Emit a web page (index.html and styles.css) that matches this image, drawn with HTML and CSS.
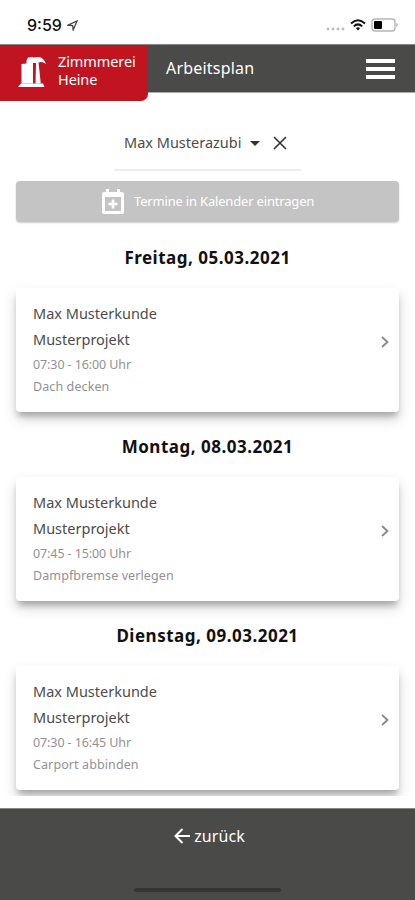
FILE: index.html
```html
<!DOCTYPE html>
<html lang="de">
<head>
    <meta charset="UTF-8">
    <meta name="viewport" content="width=device-width, initial-scale=1.0">
    <title>Arbeitsplan</title>
    <link rel="stylesheet" href="styles.css">
</head>
<body>
    <div class="status-bar">
        <span class="time">9:59</span>
        <svg class="location" width="11" height="11" viewBox="0 0 11 11"><path d="M1 5.2 10 1 6.2 10 5.6 5.6Z" fill="none" stroke="#444" stroke-width="1.3"/></svg>
        <div class="status-icons">
            <svg width="19" height="4" viewBox="0 0 19 4" fill="#bbb"><circle cx="2" cy="2" r="1.4"/><circle cx="7" cy="2" r="1.4"/><circle cx="12" cy="2" r="1.4"/><circle cx="17" cy="2" r="1.4"/></svg>
            <svg class="wifi" width="16" height="12" viewBox="0 0 16 12" fill="none" stroke="#111" stroke-width="2"><path d="M1 4.6Q8-2 15 4.6M3.8 7.4Q8 3.4 12.2 7.4"/><path d="M5.9 9.3Q8 7.3 10.1 9.3L8 11.5Z" fill="#111" stroke="none"/></svg>
            <svg width="27" height="14" viewBox="0 0 27 14"><rect x="1" y="1" width="23" height="12" rx="3" fill="#fff" stroke="#b5b5b5" stroke-width="1.4"/><rect x="3" y="3" width="8" height="8" rx="1" fill="#000"/><path d="M25.3 5v4q1.4-.6 1.4-2t-1.4-2" fill="#aaa"/></svg>
        </div>
    </div>

    <header class="header">
        <div class="brand">
            <svg class="logo" width="28" height="32" viewBox="0 0 28 32" fill="#fff">
                <path d="M3.500 8 8.500 7.500V4.500L10 1.500 15 1V27.500H3.500Z"/>
                <path d="M0 31 3 27.500H25L26.500 31Z"/>
                <path d="M15 1.500 21 1Q26 2 28 8Q24 5 20.500 6.500L22.800 27.500H17.500L18 7H15Z"/>
            </svg>
            <div class="brand-name">Zimmmerei<br>Heine</div>
        </div>
        <h1 class="title">Arbeitsplan</h1>
        <div class="menu"><span></span><span></span><span></span></div>
    </header>

    <main class="content">
        <div class="select">
            <span class="select-text">Max Musterazubi</span>
            <svg class="arrow" width="10" height="5" viewBox="0 0 10 5"><path d="M0 0h10L5 5Z" fill="#333"/></svg>
            <svg class="clear" width="14" height="14" viewBox="0 0 14 14"><path d="M1 1 13 13M13 1 1 13" stroke="#333" stroke-width="1.6"/></svg>
        </div>

        <div class="calendar-button">
            <svg width="22" height="25" viewBox="0 0 22 25"><path d="M4 0h3v3h8V0h3v3h2q2 0 2 2v18q0 2-2 2H2q-2 0-2-2V5q0-2 2-2h2ZM3 8v14h16V8Z" fill="#fff" fill-rule="evenodd"/><path d="M11 10.500v9M6.500 15h9" stroke="#fff" stroke-width="2.600"/></svg>
            <span>Termine in Kalender eintragen</span>
        </div>

        <h2 class="day">Freitag, 05.03.2021</h2>
        <div class="card">
            <div>
                <p class="customer">Max Musterkunde</p>
                <p class="project">Musterprojekt</p>
                <p class="hours">07:30 - 16:00 Uhr</p>
                <p class="task">Dach decken</p>
            </div>
            <svg class="chevron" width="8" height="12" viewBox="0 0 8 12"><path d="M1 1 6.500 6 1 11" fill="none" stroke="#888" stroke-width="1.8"/></svg>
        </div>

        <h2 class="day">Montag, 08.03.2021</h2>
        <div class="card">
            <div>
                <p class="customer">Max Musterkunde</p>
                <p class="project">Musterprojekt</p>
                <p class="hours">07:45 - 15:00 Uhr</p>
                <p class="task">Dampfbremse verlegen</p>
            </div>
            <svg class="chevron" width="8" height="12" viewBox="0 0 8 12"><path d="M1 1 6.500 6 1 11" fill="none" stroke="#888" stroke-width="1.8"/></svg>
        </div>

        <h2 class="day">Dienstag, 09.03.2021</h2>
        <div class="card">
            <div>
                <p class="customer">Max Musterkunde</p>
                <p class="project">Musterprojekt</p>
                <p class="hours">07:30 - 16:45 Uhr</p>
                <p class="task">Carport abbinden</p>
            </div>
            <svg class="chevron" width="8" height="12" viewBox="0 0 8 12"><path d="M1 1 6.500 6 1 11" fill="none" stroke="#888" stroke-width="1.8"/></svg>
        </div>
    </main>

    <footer class="footer">
        <div class="back">
            <svg width="16" height="16" viewBox="0 0 16 16"><path d="M8.500 1 1.500 8 8.500 15M1.500 8H16" fill="none" stroke="#fff" stroke-width="2"/></svg>
            <span>zurück</span>
        </div>
        <div class="home-indicator"></div>
    </footer>
</body>
</html>
```
FILE: styles.css
```css
* {
    box-sizing: border-box;
}
body {
    margin: 0;
    height: 900px;
    display: flex;
    flex-direction: column;
    overflow: hidden;
    background: #fff;
    color: #4c4c4c;
    font-family: "Noto Sans", sans-serif;
}
h1, h2, p {
    margin: 0;
    white-space: nowrap;
}
svg {
    display: block;
    flex: none;
}
.status-bar {
    height: 44px;
    flex: none;
    display: flex;
    align-items: center;
    padding: 6px 17px 0 27px;
}
.time {
    width: 36px;
    font-family: Inter, sans-serif;
    font-size: 16px;
    font-weight: 500;
    color: #111;
}
.location {
    margin-left: 4px;
}
.status-icons {
    margin-left: auto;
    display: flex;
    align-items: center;
}
.status-icons svg:first-child {
    margin-top: 8px;
}
.wifi {
    margin: 0 5px 0 5px;
}
.header {
    height: 49px;
    flex: none;
    display: flex;
    align-items: flex-start;
    background: #4a4a48;
    border-top: 1px solid #888;
    border-bottom: 1px solid #aaa;
    color: #fff;
}
.brand {
    width: 148px;
    height: 56px;
    display: flex;
    background: #c11421;
    border-radius: 0 0 7px 0;
    padding: 11px 0 0 18px;
}
.brand-name {
    margin: -4px 0 0 12px;
    font-size: 14.5px;
    line-height: 18px;
    letter-spacing: -0.1px;
}
.title {
    margin-left: 18px;
    font-size: 16px;
    font-weight: 400;
    line-height: 46px;
    letter-spacing: 0.2px;
}
.menu {
    margin: 14px 20px 0 auto;
    width: 29px;
    display: grid;
    gap: 4px;
}
.menu span {
    height: 4px;
    background: #fff;
}
.content {
    height: 703px;
    flex: none;
    overflow: hidden;
    padding: 23px 16px 0;
}
.select {
    width: 187px;
    height: 55px;
    margin: 0 auto 0 98px;
    padding: 0 0 1px 10px;
    display: flex;
    align-items: center;
    border-bottom: 2px solid #eee;
}
.select-text {
    width: 118px;
    margin-top: -1px;
    font-size: 14.5px;
    white-space: nowrap;
}
.arrow {
    margin: 2px 13px 0 8px;
}
.clear {
    margin-top: 1px;
}
.calendar-button {
    height: 41px;
    margin: 10px 0 1px;
    display: flex;
    align-items: center;
    padding-left: 86px;
    gap: 10px;
    background: #c4c4c4;
    border-radius: 4px;
    box-shadow: 0 1px 2px rgba(0,0,0,0.2);
    color: #fff;
    font-size: 13px;
    letter-spacing: -0.18px;
    white-space: nowrap;
}
.calendar-button span {
    margin-top: -2px;
}
.day {
    height: 65px;
    padding-top: 5px;
    line-height: 60px;
    text-align: center;
    font-size: 17px;
    font-weight: 700;
    letter-spacing: 0.5px;
    color: #111;
}
.card {
    height: 124px;
    padding: 12px 10px 0 17px;
    display: flex;
    justify-content: space-between;
    background: #fff;
    border-radius: 4px;
    box-shadow: 0 6px 6px -2px rgba(0,0,0,0.25), 0 7px 14px rgba(0,0,0,0.16);
}
.customer, .project {
    font-size: 14.5px;
    line-height: 26px;
}
.hours, .task {
    font-size: 12.5px;
    line-height: 22px;
    color: #929292;
}
.hours {
    margin-top: 2px;
    letter-spacing: -0.1px;
}
.task {
    letter-spacing: 0.1px;
}
.chevron {
    margin-top: 36px;
}
.footer {
    height: 92px;
    margin-top: 12px;
    flex: none;
    display: flex;
    flex-direction: column;
    align-items: center;
    background: #4a4a48;
    border-top: 1px solid #888;
    color: #fff;
}
.back {
    margin: 15px 0 0 4px;
    height: 24px;
    display: flex;
    align-items: center;
    gap: 4px;
    font-size: 16px;
    letter-spacing: 0.1px;
}
.home-indicator {
    width: 147px;
    height: 4px;
    margin-top: 40px;
    border-radius: 2px;
    background: #353533;
}
```
